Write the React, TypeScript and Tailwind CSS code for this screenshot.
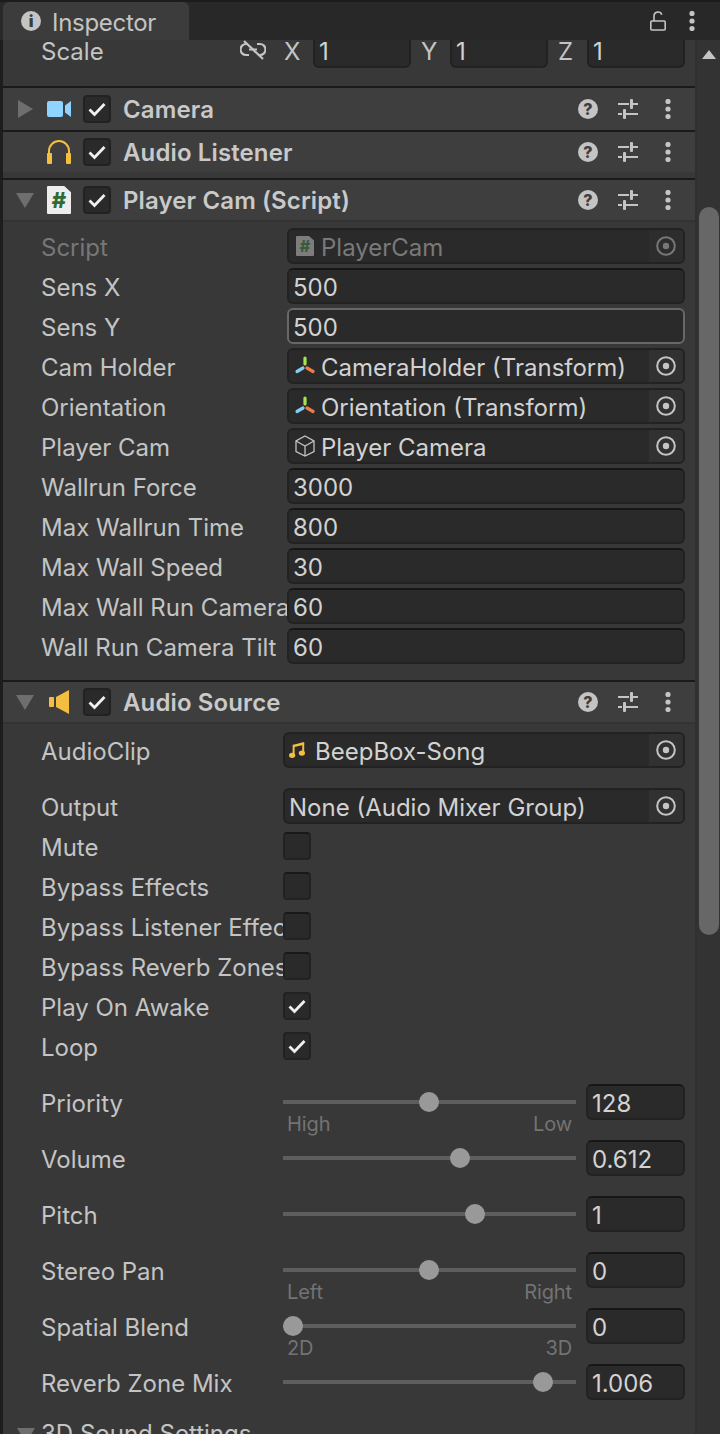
import React from "react";

const F = "font-['Inter',sans-serif]";

function Dots({ className = "" }: { className?: string }) {
  return (
    <svg width="8" height="20" viewBox="0 0 8 20" className={className}>
      <circle cx="4" cy="2.5" r="2.6" fill="#c4c4c4" />
      <circle cx="4" cy="10" r="2.6" fill="#c4c4c4" />
      <circle cx="4" cy="17.5" r="2.6" fill="#c4c4c4" />
    </svg>
  );
}

function Check() {
  return (
    <svg width="20" height="16" viewBox="0 0 20 16" fill="none">
      <path d="M2.5 8.5 L7.5 13.5 L17.5 3" stroke="#f0f0f0" strokeWidth="2.8" />
    </svg>
  );
}

function Box({ on = false, dark = false }: { on?: boolean; dark?: boolean }) {
  return (
    <div className={`w-[28px] h-[28px] shrink-0 rounded-[4px] bg-[#2a2a2a] border-2 border-[#222222] flex items-center justify-center ${dark ? "border-t-[#191919]" : ""}`}>
      {on && <Check />}
    </div>
  );
}

function HeadRight() {
  return (
    <div className="flex items-center ml-auto">
      <div className="w-[20px] h-[20px] rounded-full bg-[#c4c4c4] flex items-center justify-center text-[#3e3e3e] text-[16px] leading-none font-extrabold">?</div>
      <svg width="20" height="20" viewBox="0 0 20 20" className="ml-[20px]">
        <path d="M0 5h11M14 5h6M0 15h4M7 15h13" stroke="#c4c4c4" strokeWidth="2" />
        <rect x="12" y="0" width="3" height="10" rx="1" fill="#c4c4c4" />
        <rect x="5" y="10" width="3" height="10" rx="1" fill="#c4c4c4" />
      </svg>
      <Dots className="ml-[26px] mr-[23px]" />
    </div>
  );
}

function Header({ tri, icon, title, h = "h-[42px]" }: { tri?: "r" | "d"; icon: React.ReactNode; title: string; h?: string }) {
  return (
    <div className={`${h} shrink-0 bg-[#3e3e3e] flex items-center`}>
      <div className="w-[44px] flex justify-center shrink-0 pl-[4px]">
        {tri === "r" && <div className="w-0 h-0 border-y-[9px] border-y-transparent border-l-[15px] border-l-[#6e6e6e] ml-[-4px]" />}
        {tri === "d" && <div className="w-0 h-0 border-x-[9px] border-x-transparent border-t-[15px] border-t-[#6e6e6e] ml-[-4px]" />}
      </div>
      <div className="w-[24px] flex justify-center shrink-0">{icon}</div>
      <div className="ml-[12px]"><Box on /></div>
      <div className="ml-[12px] pt-[2px] text-[24px] font-semibold text-[#c9c9c9] tracking-[0.12px] whitespace-nowrap">{title}</div>
      <HeadRight />
    </div>
  );
}

function Target() {
  return (
    <svg width="20" height="20" viewBox="0 0 20 20" fill="none">
      <circle cx="10" cy="10" r="8.8" stroke="#c4c4c4" strokeWidth="2" />
      <circle cx="10" cy="10" r="3.2" fill="#c4c4c4" />
    </svg>
  );
}

function Axis() {
  return (
    <svg width="22" height="20" viewBox="0 0 22 20" className="shrink-0" strokeLinecap="round" strokeWidth="3.2" fill="none">
      <path d="M12 2v6" stroke="#a7e34f" />
      <path d="M14 12l6 3.5" stroke="#ee7a45" />
      <path d="M10 12l-6 3.5" stroke="#84cdf5" />
    </svg>
  );
}

function Cube() {
  return (
    <svg width="22" height="22" viewBox="0 0 22 22" fill="none" stroke="#c4c4c4" strokeWidth="1.3" className="shrink-0">
      <path d="M12 1L21 6v10.5L12 21 3 16.5V6z" />
      <path d="M3 6L12 11l9-5M12 11v10" />
    </svg>
  );
}

function ScriptIcon({ dim = false }: { dim?: boolean }) {
  return (
    <div className={`flex items-center justify-center shrink-0 ${dim ? "bg-[#7d7d7d] w-[18px] h-[20px] text-[16px] text-[#3a5a3a] ml-[3px]" : "bg-[#ededed] w-[24px] h-[28px] text-[22px] text-[#2f6b34]"} [clip-path:polygon(0_0,72%_0,100%_22%,100%_100%,0_100%)] rounded-[1px] font-extrabold leading-none`}>
      #
    </div>
  );
}

function Label({ children, dim = false, w = "w-[246px]" }: { children: React.ReactNode; dim?: boolean; w?: string }) {
  return (
    <div className={`${w} shrink-0 overflow-hidden whitespace-nowrap text-[24px] pt-[4px] ${dim ? "text-[#777777]" : "text-[#c4c4c4]"}`}>{children}</div>
  );
}

function Input({ v, focus = false, className = "flex-1" }: { v: string; focus?: boolean; className?: string }) {
  return (
    <div className={`${className} h-[36px] rounded-[6px] bg-[#2a2a2a] border-2 ${focus ? "border-[#686868]" : "border-[#222222] border-t-[#161616]"} flex items-center pl-[4px] pt-[4px] text-[24px] text-[#d2d2d2] overflow-hidden whitespace-nowrap`}>
      {v}
    </div>
  );
}

function ObjField({ icon, v, dim = false, gap = "gap-[6px]" }: { icon?: React.ReactNode; v: string; dim?: boolean; gap?: string }) {
  return (
    <div className="flex-1 h-[36px] rounded-[6px] bg-[#2a2a2a] border-2 border-[#222222] flex items-center overflow-hidden">
      <div className={`flex-1 flex items-center ${gap} pl-[4px] text-[24px] whitespace-nowrap ${dim ? "text-[#797979]" : "text-[#d2d2d2]"}`}>
        {icon}
        <span className="pt-[4px]">{v}</span>
      </div>
      <div className={`w-[34px] h-full flex items-center justify-center bg-[#313131] ${dim ? "opacity-50" : ""}`}>
        <Target />
      </div>
    </div>
  );
}

function Row({ label, dim, children, w, h = "h-[40px]" }: { label: string; dim?: boolean; children: React.ReactNode; w?: string; h?: string }) {
  return (
    <div className={`${h} flex items-center pl-[38px] pr-[10px]`}>
      <Label dim={dim} w={w}>{label}</Label>
      {children}
    </div>
  );
}

function Slider({ label, v, thumb, left, right }: { label: string; v: string; thumb: string; left?: string; right?: string }) {
  return (
    <div className="h-[56px] flex items-start pl-[38px] pr-[10px]">
      <Label w="w-[242px]"><div className="h-[36px] flex items-center">{label}</div></Label>
      <div className="w-[293px] shrink-0">
        <div className="h-[40px] relative flex items-center">
          <div className="w-full h-[4px] bg-[#5e5e5e]" />
          <div className={`absolute top-[10px] w-[20px] h-[20px] rounded-full bg-[#999999] ${thumb}`} />
        </div>
        {left && (
          <div className="mt-[-6px] h-[16px] flex items-center justify-between px-[4px] text-[20px] tracking-[-0.1px] text-[#737373]">
            <span>{left}</span>
            <span>{right}</span>
          </div>
        )}
      </div>
      <div className="ml-[10px] flex-1 h-[40px] flex items-center"><Input v={v} className="w-full" /></div>
    </div>
  );
}

export default function App() {
  return (
    <div className={`${F} w-[720px] h-[1434px] overflow-hidden bg-[#383838] flex flex-col`}>
      {/* tab bar */}
      <div className="h-[40px] shrink-0 bg-[#282828] border-t-2 border-t-[#1c1c1c] flex items-stretch pl-[3px]">
        <div className="w-[186px] bg-[#3c3c3c] rounded-t-[6px] flex items-center pl-[18px] text-[#c4c4c4] text-[24px] tracking-[-0.3px]">
          <div className="w-[20px] h-[20px] rounded-full bg-[#c4c4c4] flex items-center justify-center text-[#3c3c3c] text-[16px] font-black leading-none">i</div>
          <span className="ml-[11px] pt-[4px]">Inspector</span>
        </div>
        <div className="ml-auto flex items-center">
          <svg width="16" height="20" viewBox="0 0 16 20" fill="none" stroke="#c4c4c4" strokeWidth="1.6">
            <rect x="0.8" y="10" width="14.4" height="9" rx="1" />
            <path d="M4 10V5a4 4 0 0 1 7.8-1.2" />
          </svg>
          <Dots className="ml-[22px] mr-[24px]" />
        </div>
      </div>

      <div className="flex-1 min-h-0 flex">
        <div className="w-[695px] shrink-0 border-l-[3px] border-l-[#1d1d1d] flex flex-col">
          {/* Transform tail */}
          <div className="h-[28px] shrink-0 overflow-hidden flex items-end pl-[38px] pr-[10px]">
            <div className="w-[199px] shrink-0 h-[36px] flex items-center text-[24px] text-[#c4c4c4] pt-[4px]">Scale</div>
            <div className="h-[36px] w-[30px] shrink-0 flex items-center">
              <svg width="26" height="20" viewBox="0 0 26 20" fill="none" stroke="#c4c4c4" strokeWidth="2.2">
                <path d="M8 4H6a5.5 5.5 0 0 0 0 11h3M17 4h3a5.5 5.5 0 0 1 0 11h-2M9 9.5h8" />
                <path d="M4 1l19 18" />
              </svg>
            </div>
            {["X", "Y", "Z"].map((a, i) => (
              <div key={a} className={`flex items-end ${i === 0 ? "ml-[14px]" : "ml-[10px]"}`}>
                <div className="w-[29px] h-[36px] flex items-center text-[24px] text-[#c4c4c4] pt-[4px]">{a}</div>
                <Input v="1" className="w-[98px] shrink-0" />
              </div>
            ))}
          </div>
          <div className="h-[18px] shrink-0" />

          {/* Camera */}
          <div className="h-[2px] shrink-0 bg-[#1a1a1a]" />
          <Header
            tri="r"
            title="Camera"
            icon={
              <svg width="24" height="16" viewBox="0 0 24 16">
                <rect x="0" y="0" width="16" height="16" rx="2" fill="#8fd3ff" />
                <path d="M18 4.5L24 0v16l-6-4.5z" fill="#8fd3ff" />
              </svg>
            }
          />
          <div className="h-[2px] shrink-0 bg-[#1a1a1a]" />
          {/* Audio Listener */}
          <Header
            title="Audio Listener"
            h="h-[40px]"
            icon={
              <svg width="24" height="24" viewBox="0 0 24 24" fill="none">
                <path d="M2 15V11a10 10 0 0 1 20 0v4" stroke="#f4bf40" strokeWidth="2" />
                <rect x="0" y="13" width="5" height="11" rx="1" fill="#f4bf40" />
                <rect x="19" y="13" width="5" height="11" rx="1" fill="#f4bf40" />
              </svg>
            }
          />
          <div className="h-[6px] shrink-0 bg-[#383838]" />
          <div className="h-[2px] shrink-0 bg-[#1a1a1a]" />
          {/* Player Cam */}
          <Header tri="d" title="Player Cam (Script)" h="h-[40px]" icon={<ScriptIcon />} />
          <div className="h-[2px] shrink-0 bg-[#333333]" />
          <div className="pt-[4px] pb-[14px] shrink-0">
            <Row label="Script" dim><ObjField dim icon={<ScriptIcon dim />} v="PlayerCam" gap="gap-[7px]" /></Row>
            <Row label="Sens X"><Input v="500" /></Row>
            <Row label="Sens Y"><Input v="500" focus /></Row>
            <Row label="Cam Holder"><ObjField icon={<Axis />} v="CameraHolder (Transform)" /></Row>
            <Row label="Orientation"><ObjField icon={<Axis />} v="Orientation (Transform)" /></Row>
            <Row label="Player Cam"><ObjField icon={<Cube />} v="Player Camera" /></Row>
            <Row label="Wallrun Force"><Input v="3000" /></Row>
            <Row label="Max Wallrun Time"><Input v="800" /></Row>
            <Row label="Max Wall Speed"><Input v="30" /></Row>
            <Row label="Max Wall Run Camera Tilt"><Input v="60" /></Row>
            <Row label="Wall Run Camera Tilt"><Input v="60" /></Row>
          </div>
          {/* Audio Source */}
          <div className="h-[2px] shrink-0 bg-[#1a1a1a]" />
          <Header
            tri="d"
            title="Audio Source"
            h="h-[40px]"
            icon={
              <svg width="20" height="24" viewBox="0 0 20 24">
                <rect x="0" y="7" width="5" height="10" rx="1" fill="#f4bf40" />
                <path d="M7 7L20 0v24L7 17z" fill="#f4bf40" />
              </svg>
            }
          />
          <div className="h-[2px] shrink-0 bg-[#333333]" />
          <div className="pt-[6px] shrink-0">
            <Row label="AudioClip" w="w-[242px]">
              <ObjField
                gap="gap-[10px]"
                icon={
                  <svg width="16" height="20" viewBox="0 0 18 20" className="shrink-0">
                    <path d="M5 4L17 1v3L5 7z" fill="#f4bf40" />
                    <path d="M5.2 4v11M16 2v10" stroke="#f4bf40" strokeWidth="2.2" />
                    <ellipse cx="3.5" cy="16" rx="3.5" ry="3" fill="#f4bf40" />
                    <ellipse cx="14.5" cy="13.5" rx="3.5" ry="3" fill="#f4bf40" />
                  </svg>
                }
                v="BeepBox-Song"
              />
            </Row>
            <div className="h-[16px]" />
            <Row label="Output" w="w-[242px]"><ObjField v="None (Audio Mixer Group)" /></Row>
            <Row label="Mute" w="w-[242px]"><Box dark /></Row>
            <Row label="Bypass Effects" w="w-[242px]"><Box dark /></Row>
            <Row label="Bypass Listener Effects" w="w-[242px]"><Box dark /></Row>
            <Row label="Bypass Reverb Zones" w="w-[242px]"><Box dark /></Row>
            <Row label="Play On Awake" w="w-[242px]"><Box on /></Row>
            <Row label="Loop" w="w-[242px]"><Box on /></Row>
            <div className="h-[16px]" />
            <Slider label="Priority" v="128" thumb="left-[136px]" left="High" right="Low" />
            <Slider label="Volume" v="0.612" thumb="left-[167px]" />
            <Slider label="Pitch" v="1" thumb="left-[182px]" />
            <Slider label="Stereo Pan" v="0" thumb="left-[136px]" left="Left" right="Right" />
            <Slider label="Spatial Blend" v="0" thumb="left-0" left="2D" right="3D" />
            <Slider label="Reverb Zone Mix" v="1.006" thumb="left-[250px]" />
            <div className="mt-[-5px] flex items-center h-[40px] whitespace-nowrap text-[24px] text-[#c4c4c4]">
              <div className="w-[38px] flex justify-center pl-[8px] pt-[4px]">
                <div className="w-0 h-0 border-x-[9px] border-x-transparent border-t-[15px] border-t-[#6e6e6e]" />
              </div>
              <span className="pt-[2px]">3D Sound Settings</span>
            </div>
          </div>
        </div>

        {/* scrollbar */}
        <div className="w-[25px] shrink-0 bg-[#333333] border-l-[2px] border-l-[#303030] flex flex-col items-center">
          <div className="mt-[10px] w-0 h-0 border-x-[7px] border-x-transparent border-b-[9px] border-b-[#c4c4c4]" />
          <div className="mt-[148px] w-[20px] h-[728px] rounded-[10px] bg-[#676767] shrink-0" />
        </div>
      </div>
    </div>
  );
}
